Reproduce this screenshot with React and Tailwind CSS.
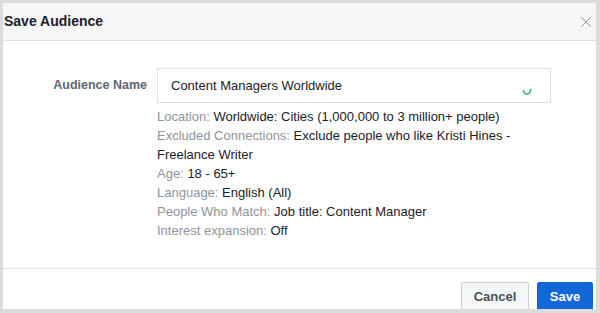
import { X } from 'lucide-react';

const details = [
  { label: 'Location:', value: 'Worldwide: Cities (1,000,000 to 3 million+ people)' },
  { label: 'Excluded Connections:', value: 'Exclude people who like Kristi Hines - Freelance Writer' },
  { label: 'Age:', value: '18 - 65+' },
  { label: 'Language:', value: 'English (All)' },
  { label: 'People Who Match:', value: 'Job title: Content Manager' },
  { label: 'Interest expansion:', value: 'Off' },
];

function Spinner() {
  return (
    <svg width="10" height="10" viewBox="0 0 10 10" className="shrink-0">
      <path d="M1.6 4.6 A3.4 3.4 0 0 0 8.4 4.6 L8.6 3.4" fill="none" stroke="#33b56a" strokeWidth="1.6" strokeLinecap="round" />
    </svg>
  );
}

export default function App() {
  return (
    <div className="w-[600px] h-[313px] bg-[#dcdcdc] pt-[3px] pl-[3px] pr-[4px] pb-[4px] font-['Liberation_Sans',Arial,sans-serif]">
      <div className="flex flex-col h-full bg-white overflow-hidden">
        {/* Header */}
        <div className="h-[38px] shrink-0 flex items-center justify-between bg-[#f5f6f7] border-b border-[#dddfe2] pl-[1px] pr-[1px]">
          <h2 className="text-[14px] font-bold text-[#1d2129]">Save Audience</h2>
          <X size={18} strokeWidth={1.3} className="text-[#90949c]" />
        </div>

        {/* Body */}
        <div className="h-[227px] shrink-0 pt-[27px]">
          <div className="grid grid-cols-[144px_394px] gap-x-[10px]">
            <label className="h-[35px] flex items-center justify-end text-[12.5px] font-bold text-[#606770]">
              Audience Name
            </label>
            <div className="h-[35px] flex items-center justify-between border border-[#dddfe2] pl-[13px] pr-[18px]">
              <span className="text-[13px] text-[#1d2129]">Content Managers Worldwide</span>
              <div className="pt-[10px]">
                <Spinner />
              </div>
            </div>
            <div />
            <div className="mt-[4px] text-[13px] leading-[19px] pr-[40px]">
              {details.map((d) => (
                <p key={d.label}>
                  <span className="text-[#90949c]">{d.label}</span>{' '}
                  <span className="text-[#1d2129]">{d.value}</span>
                </p>
              ))}
            </div>
          </div>
        </div>

        {/* Footer */}
        <div className="h-[1px] shrink-0 bg-[#dddfe2]" />
        <div className="flex-1 flex justify-end items-start gap-[8px] pt-[13px] pr-[3px]">
          <button className="w-[68px] h-[30px] bg-[#f5f6f7] border border-[#ccd0d5] rounded-[2px] text-[13px] font-bold text-[#4b4f56]">
            Cancel
          </button>
          <button className="w-[56px] h-[30px] bg-[#1467d6] border border-[#1467d6] rounded-[2px] text-[13px] font-bold text-white">
            Save
          </button>
        </div>
      </div>
    </div>
  );
}
